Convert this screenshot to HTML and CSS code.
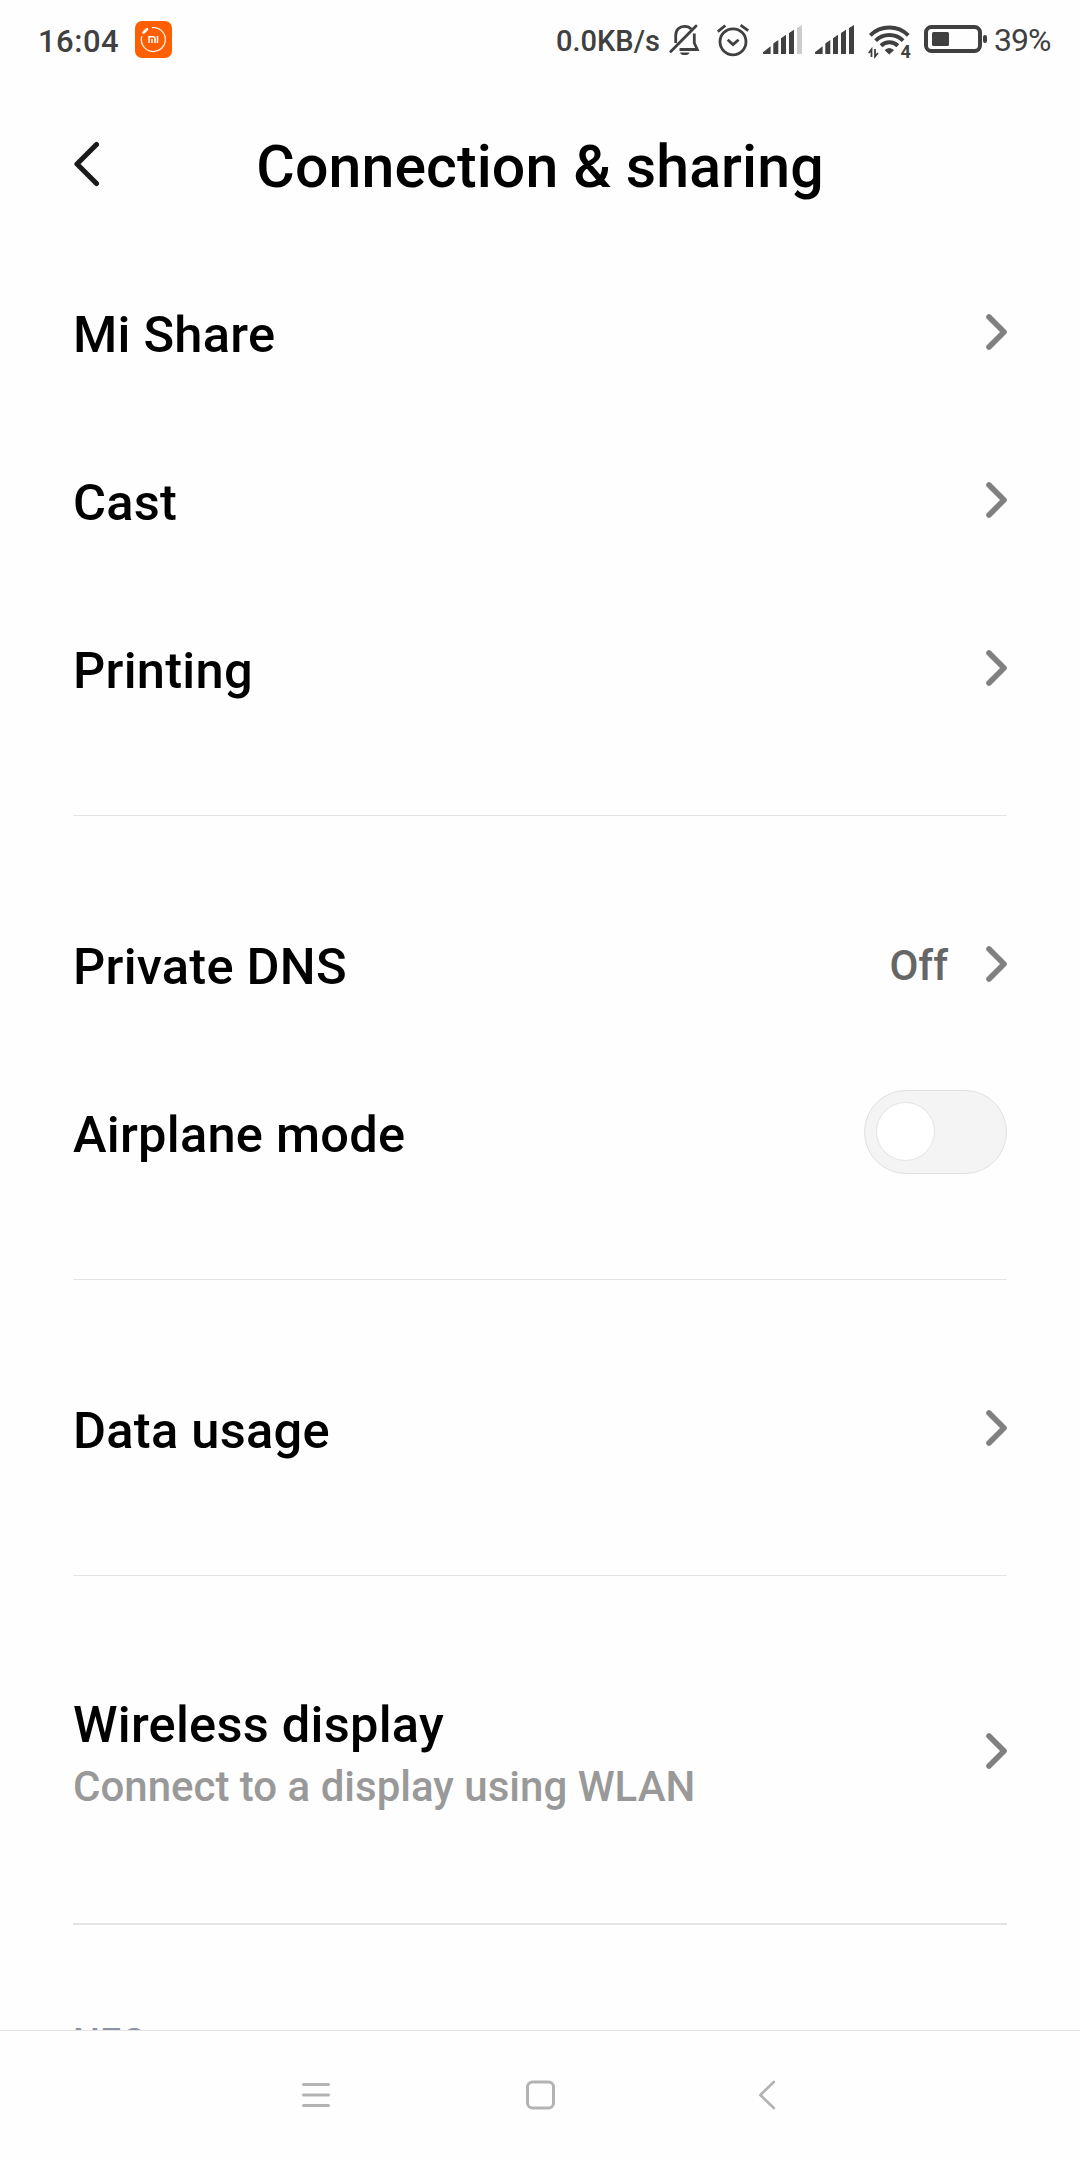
FILE: index.html
```html
<!DOCTYPE html>
<html lang="en">
<head>
    <meta charset="UTF-8">
    <meta name="viewport" content="width=device-width, initial-scale=1.0">
    <title>Connection &amp; sharing</title>
    <link rel="stylesheet" href="styles.css">
</head>
<body>
    <div class="screen">
        <!-- Status bar -->
        <div class="status-bar">
            <span class="clock">16:04</span>
            <svg class="app-icon" width="37" height="37" viewBox="0 0 37 37">
                <rect width="37" height="37" rx="7" fill="#ff5f00"/>
                <path d="M17 6.6a12 12 0 1 1-10.2 8.6" fill="none" stroke="#fff" stroke-width="1.2"/>
                <path d="M8.5 11.5l3.5-3.3" stroke="#fff" stroke-width="2.6" stroke-linecap="round"/>
                <path d="M14 22v-6.2h4.3q1.7 0 1.7 1.7V22M17 18v4M22.5 15v7" fill="none" stroke="#fff" stroke-width="1.5"/>
            </svg>
            <span class="speed">0.0KB/s</span>
            <svg class="bell" width="32" height="34" viewBox="0 0 32 34" fill="none" stroke="#404040" stroke-width="2.8">
                <path d="M6.7 20V12.5C6.7 6.5 10.5 3.3 15.5 3.3c3 0 5.3 1 6.8 2.9M25.3 10.5V20l3 6.5H10.5"/>
                <path d="M1.8 28.5L27 3" stroke-linecap="round"/>
                <path d="M11 29.5h9.5a4.8 3 0 0 1-9.5 0z" fill="#404040" stroke="none"/>
            </svg>
            <svg class="alarm" width="34" height="34" viewBox="0 0 34 34" fill="none" stroke="#404040" stroke-width="2.8">
                <circle cx="17" cy="18.8" r="13"/>
                <path d="M11.7 16.8l5.3 4.8 5.6-4.8M1.8 8.7l7.5-6.2M32.2 7.7l-7.6-5.6"/>
            </svg>
            <svg class="signal" width="39" height="30" viewBox="0 0 39 30" fill="#404040">
                <path d="M0 28.5v-1.3l7.6-6v7.8H.5z"/>
                <path d="M10.3 18.5l5-3.4V29h-5zM18 13.3l5-3.5V29h-5zM26 8l5-3.2V29h-5z"/>
                <path d="M34 3l5-3v29h-5z" fill="#ccc"/>
            </svg>
            <svg class="signal second" width="39" height="30" viewBox="0 0 39 30" fill="#404040">
                <path d="M0 28.5v-1.3l7.6-6v7.8H.5z"/>
                <path d="M10.3 18.5l5-3.4V29h-5zM18 13.3l5-3.5V29h-5zM26 8l5-3.2V29h-5zM34 3l5-3v29h-5z"/>
            </svg>
            <svg class="wifi" width="44" height="36" viewBox="0 0 44 36" fill="none" stroke="#404040" stroke-width="4">
                <path d="M2.3 12.3a27 27 0 0 1 38 0M7.6 17.6a19.5 19.5 0 0 1 27.5 0M13 22.7a12 12 0 0 1 16.8 0"/>
                <path d="M17.2 27.2q4-3.2 8.2 0L21.3 31z" fill="#404040" stroke-width="1"/>
                <path d="M3.5 34V26.5L.8 30M7 26v7.5L10 30" stroke-width="1.8"/>
                <text x="32.5" y="34.5" class="wifi-num">4</text>
            </svg>
            <svg class="battery" width="64" height="30" viewBox="0 0 64 30">
                <rect x="2" y="2" width="54" height="24" rx="5.5" fill="none" stroke="#404040" stroke-width="4"/>
                <rect x="8" y="7" width="17" height="14" rx="1.5" fill="#404040"/>
                <rect x="59" y="10" width="4" height="8" rx="2" fill="#404040"/>
            </svg>
            <span class="percent">39%</span>
        </div>

        <!-- Title -->
        <header class="header">
            <svg class="back" width="26" height="46" viewBox="0 0 26 46">
                <path d="M23.5 3.5L4 23l19.5 19.5" fill="none" stroke="#1a1a1a" stroke-width="5.2" stroke-linecap="round" stroke-linejoin="round"/>
            </svg>
            <h1>Connection &amp; sharing</h1>
        </header>

        <!-- Settings list -->
        <main class="list">
            <section class="group">
                <div class="row">
                    <span class="label">Mi Share</span>
                    <svg class="chevron" viewBox="0 0 21 36"><path d="M3 3l15 15L3 33"/></svg>
                </div>
                <div class="row">
                    <span class="label">Cast</span>
                    <svg class="chevron" viewBox="0 0 21 36"><path d="M3 3l15 15L3 33"/></svg>
                </div>
                <div class="row">
                    <span class="label">Printing</span>
                    <svg class="chevron" viewBox="0 0 21 36"><path d="M3 3l15 15L3 33"/></svg>
                </div>
            </section>
            <section class="group">
                <div class="row">
                    <span class="label">Private DNS</span>
                    <span class="value">Off</span>
                    <svg class="chevron" viewBox="0 0 21 36"><path d="M3 3l15 15L3 33"/></svg>
                </div>
                <div class="row">
                    <span class="label">Airplane mode</span>
                    <span class="toggle"><span class="knob"></span></span>
                </div>
            </section>
            <section class="group">
                <div class="row">
                    <span class="label">Data usage</span>
                    <svg class="chevron" viewBox="0 0 21 36"><path d="M3 3l15 15L3 33"/></svg>
                </div>
            </section>
            <section class="group">
                <div class="row tall">
                    <div class="label">
                        <div class="name">Wireless display</div>
                        <div class="hint">Connect to a display using WLAN</div>
                    </div>
                    <svg class="chevron" viewBox="0 0 21 36"><path d="M3 3l15 15L3 33"/></svg>
                </div>
            </section>
            <section class="group">
                <div class="category">NFC</div>
            </section>
        </main>

        <!-- Navigation bar -->
        <nav class="nav-bar">
            <svg width="30" height="30" viewBox="0 0 30 30" stroke="#b3b3b3" stroke-width="3" stroke-linecap="round">
                <path d="M3.5 4.5h25M3.5 15h25M3.5 25.5h25"/>
            </svg>
            <svg width="30" height="30" viewBox="0 0 30 30" fill="none" stroke="#b3b3b3" stroke-width="3">
                <rect x="2.5" y="2" width="26" height="26" rx="5"/>
            </svg>
            <svg width="30" height="30" viewBox="0 0 30 30" fill="none" stroke="#b3b3b3" stroke-width="2.6" stroke-linecap="round" stroke-linejoin="round">
                <path d="M23.8 2L10.3 15l13.5 13"/>
            </svg>
        </nav>
    </div>
</body>
</html>
```
FILE: styles.css
```css
* {
    box-sizing: border-box;
}
body {
    margin: 0;
    background-color: #fefefe;
    font-family: Roboto, "Liberation Sans", sans-serif;
    font-weight: 500;
    color: #000;
}
svg {
    display: block;
    flex: none;
}
.screen {
    width: 1080px;
    height: 2160px;
    display: flex;
    flex-direction: column;
    overflow: hidden;
}

/* status bar */
.status-bar {
    height: 80px;
    display: flex;
    align-items: center;
    padding: 0 29px 0 38px;
    color: #404040;
    white-space: nowrap;
}
.clock {
    width: 97px;
    font-size: 31px;
    letter-spacing: 0.5px;
    padding-top: 2px;
}
.app-icon {
    margin-bottom: 1px;
}
.speed {
    margin-left: auto;
    width: 113px;
    font-size: 29px;
    padding-top: 1px;
}
.bell {
    margin-right: 15px;
}
.alarm {
    margin-right: 13px;
}
.signal {
    margin-bottom: 1px;
}
.second {
    margin-left: 13px;
}
.wifi {
    margin: 2px 0 0 14px;
    overflow: visible;
}
.wifi-num {
    font-size: 18px;
    font-weight: 700;
    fill: #404040;
    stroke: none;
}
.battery {
    margin-left: 12px;
}
.percent {
    width: 57px;
    margin-left: 6px;
    font-size: 32px;
    font-weight: 400;
    letter-spacing: -1px;
}

/* header */
.header {
    height: 168px;
    display: grid;
    grid-template-columns: 26px 1fr 26px;
    align-items: center;
    padding: 0 73px;
}
h1 {
    margin: 6px 0 0;
    font-size: 59px;
    font-weight: 500;
    letter-spacing: 0.1px;
    line-height: 68px;
    text-align: center;
    white-space: nowrap;
}

/* list */
.list {
    flex: 1;
    min-height: 0;
    padding: 0 73px;
    overflow: hidden;
}
.group + .group {
    margin-top: 63px;
    padding-top: 64px;
    border-top: 1px solid #e4e4e4;
}
.group:last-child {
    margin-top: 62px;
    border-top-width: 2px;
}
.row {
    height: 168px;
    display: flex;
    align-items: center;
}
.tall {
    height: 221px;
}
.label {
    flex: 1;
    font-size: 50.6px;
    letter-spacing: 0.25px;
    line-height: 60px;
    padding-top: 5px;
}
.tall .label {
    padding-top: 8px;
}
.value {
    font-size: 42px;
    color: #666;
    margin-right: 38px;
    padding-top: 2px;
}
.hint {
    font-size: 42px;
    letter-spacing: 0;
    line-height: 60px;
    padding-top: 2px;
    margin-bottom: -2px;
    color: #999;
}
.chevron {
    width: 21px;
    height: 36px;
}
.chevron path {
    fill: none;
    stroke: #808080;
    stroke-width: 5.6;
    stroke-linecap: round;
    stroke-linejoin: round;
}
.toggle {
    width: 143px;
    height: 84px;
    padding: 11px;
    border: 1px solid #e0e0e0;
    border-radius: 42px;
    background-color: #f4f4f4;
}
.knob {
    display: block;
    width: 59px;
    height: 59px;
    border: 1px solid #e4e4e4;
    border-radius: 50%;
    background-color: #fff;
}
.category {
    font-size: 38px;
    line-height: 42px;
    padding-top: 33px;
    color: #8c93a3;
}

/* navigation bar */
.nav-bar {
    height: 130px;
    display: flex;
    justify-content: center;
    align-items: center;
    gap: 195px;
    padding-bottom: 1px;
    border-top: 1px solid #e4e4e4;
}
```
